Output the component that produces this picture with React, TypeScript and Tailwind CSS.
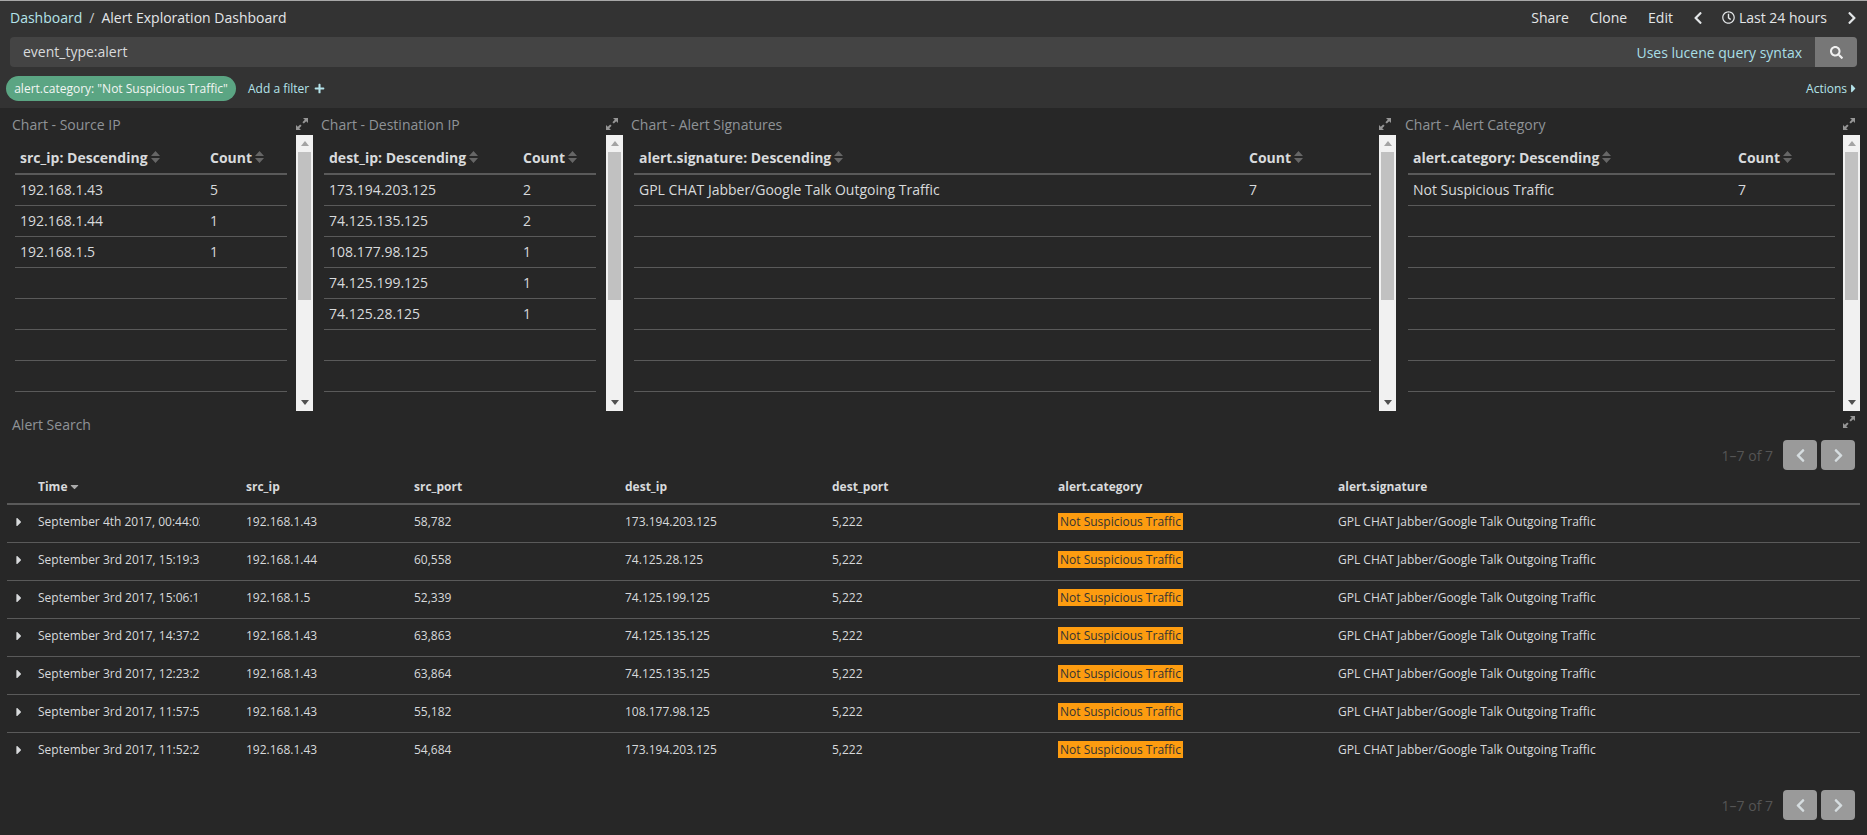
import { FaCaretDown, FaCaretRight, FaChevronLeft, FaChevronRight, FaPlus, FaRegClock, FaSearch } from "react-icons/fa";

const charts = [
  {
    title: "Chart - Source IP",
    width: "w-[301px]",
    table: "w-[272px]",
    cols: "grid-cols-[190px_1fr]",
    field: "src_ip: Descending",
    rows: [["192.168.1.43", "5"], ["192.168.1.44", "1"], ["192.168.1.5", "1"]],
  },
  {
    title: "Chart - Destination IP",
    width: "w-[302px]",
    table: "w-[272px]",
    cols: "grid-cols-[194px_1fr]",
    field: "dest_ip: Descending",
    rows: [["173.194.203.125", "2"], ["74.125.135.125", "2"], ["108.177.98.125", "1"], ["74.125.199.125", "1"], ["74.125.28.125", "1"]],
  },
  {
    title: "Chart - Alert Signatures",
    width: "w-[766px] pr-[1px]",
    table: "w-[737px]",
    cols: "grid-cols-[610px_1fr]",
    field: "alert.signature: Descending",
    rows: [["GPL CHAT Jabber/Google Talk Outgoing Traffic", "7"]],
  },
  {
    title: "Chart - Alert Category",
    width: "w-[455px]",
    table: "w-[427px]",
    cols: "grid-cols-[325px_1fr]",
    field: "alert.category: Descending",
    rows: [["Not Suspicious Traffic", "7"]],
  },
];

const alerts = [
  ["September 4th 2017, 00:44:03.5", "192.168.1.43", "58,782", "173.194.203.125"],
  ["September 3rd 2017, 15:19:32.1", "192.168.1.44", "60,558", "74.125.28.125"],
  ["September 3rd 2017, 15:06:17.2", "192.168.1.5", "52,339", "74.125.199.125"],
  ["September 3rd 2017, 14:37:26.4", "192.168.1.43", "63,863", "74.125.135.125"],
  ["September 3rd 2017, 12:23:29.8", "192.168.1.43", "63,864", "74.125.135.125"],
  ["September 3rd 2017, 11:57:55.6", "192.168.1.43", "55,182", "108.177.98.125"],
  ["September 3rd 2017, 11:52:28.3", "192.168.1.43", "54,684", "173.194.203.125"],
];

const searchCols = "grid-cols-[31px_208px_168px_211px_207px_226px_280px_1fr]";

function ExpandIcon() {
  return (
    <svg width="12" height="12" viewBox="0 0 12 12" className="text-[#969696]">
      <path d="M7 0h5v5l-1.8-1.8-2.4 2.4-1.4-1.4 2.4-2.4z M5 12H0V7l1.8 1.8 2.4-2.4 1.4 1.4-2.4 2.4z" fill="currentColor" />
    </svg>
  );
}

function SortIcon() {
  return (
    <svg width="9" height="12" viewBox="0 0 9 12" className="ml-[3px] text-[#666666]">
      <path d="M4.5 0 9 5H0z M0 7h9l-4.5 5z" fill="currentColor" />
    </svg>
  );
}

function Scrollbar() {
  return (
    <div className="flex h-[276px] w-[17px] shrink-0 flex-col items-center bg-[#f1f1f1]">
      <div className="flex h-[17px] items-center justify-center">
        <svg width="8" height="5" viewBox="0 0 8 5"><path d="M4 0l4 5H0z" fill="#a3a3a3" /></svg>
      </div>
      <div className="h-[148px] w-[13px] bg-[#c1c1c1]" />
      <div className="mt-auto flex h-[17px] items-center justify-center">
        <svg width="8" height="5" viewBox="0 0 8 5"><path d="M0 0h8L4 5z" fill="#505050" /></svg>
      </div>
    </div>
  );
}

function ChartPanel({ chart }: { chart: (typeof charts)[number] }) {
  const empty = 7 - chart.rows.length;
  return (
    <div className={`${chart.width} shrink-0`}>
      <div className="flex h-[27px] items-center justify-between pr-[5px] pt-[5px] text-[14px] text-[#8f9397]">
        <span>{chart.title}</span>
        <ExpandIcon />
      </div>
      <div className="flex justify-between pl-[3px]">
        <div className={chart.table}>
          <div className={`grid h-[40px] ${chart.cols} items-center border-b-2 border-[#5a5a5a] px-[5px] pt-[6px] text-[14px] font-bold text-[#d8dadc]`}>
            <span className="flex items-center">{chart.field}<SortIcon /></span>
            <span className="flex items-center">Count<SortIcon /></span>
          </div>
          {chart.rows.map((row) => (
            <div key={row[0]} className={`grid h-[31px] ${chart.cols} items-center border-b border-[#5a5a5a] px-[5px] pb-[2px] text-[14px] text-[#d8dadc]`}>
              <span>{row[0]}</span>
              <span>{row[1]}</span>
            </div>
          ))}
          {Array.from({ length: empty }).map((_, i) => (
            <div key={i} className="h-[31px] border-b border-[#5a5a5a]" />
          ))}
        </div>
        <Scrollbar />
      </div>
    </div>
  );
}

function Pager() {
  return (
    <div className="flex items-center justify-end">
      <span className="mr-[10px] text-[14px] text-[#555555]">1–7 of 7</span>
      <button className="flex h-[30px] w-[34px] items-center justify-center rounded-[4px] bg-[#9a9a9a] text-[#d6dde0]">
        <FaChevronLeft size={15} />
      </button>
      <button className="ml-[4px] flex h-[30px] w-[34px] items-center justify-center rounded-[4px] bg-[#9a9a9a] text-[#d6dde0]">
        <FaChevronRight size={15} />
      </button>
    </div>
  );
}

export default function App() {
  return (
    <div className="h-[835px] w-[1867px] overflow-hidden bg-[#272727] font-['Open_Sans',sans-serif]">
      {/* Top nav */}
      <div className="h-[108px] border-t border-[#a8a8a8] bg-[#333333]">
        <div className="flex h-[35px] items-center justify-between pb-[2px] pl-[10px] pr-[8px] text-[14px] text-[#e3e6e8]">
          <div className="flex items-center">
            <span className="text-[#b4e3ea]">Dashboard</span>
            <span className="mx-[7px] text-[#c8c8c8]">/</span>
            <span>Alert Exploration Dashboard</span>
          </div>
          <div className="flex items-center">
            <span>Share</span>
            <span className="ml-[21px]">Clone</span>
            <span className="ml-[21px]">Edit</span>
            <FaChevronLeft size={14} className="ml-[18px]" />
            <FaRegClock size={13} className="ml-[17px]" />
            <span className="ml-[4px]">Last 24 hours</span>
            <FaChevronRight size={14} className="ml-[18px]" />
          </div>
        </div>
        <div className="mx-[10px] mt-[1px] flex h-[30px] items-center overflow-hidden rounded-[4px] bg-[#444444] text-[14px]">
          <span className="pb-[2px] pl-[13px] text-[#d8dadc]">event_type:alert</span>
          <span className="ml-auto text-[#a9dfe6]">Uses lucene query syntax</span>
          <div className="ml-[13px] flex h-full w-[42px] items-center justify-center bg-[#777777] text-[#f0f0f0]">
            <FaSearch size={13} />
          </div>
        </div>
        <div className="mt-[9px] flex h-[25px] items-center pl-[6px] pr-[10px] text-[12px]">
          <span className="flex h-[25px] w-[230px] items-center justify-center rounded-full bg-[#5ba583] text-[#f2f5f3]">alert.category: "Not Suspicious Traffic"</span>
          <span className="ml-[12px] flex items-center text-[#b4e3ea]">Add a filter<FaPlus size={11} className="ml-[5px]" /></span>
          <span className="ml-auto flex items-center text-[#b4e3ea]">Actions<FaCaretRight size={13} className="-mr-[3px]" /></span>
        </div>
      </div>

      {/* Chart panels */}
      <div className="flex gap-[8px] pl-[12px]">
        {charts.map((chart) => (
          <ChartPanel key={chart.title} chart={chart} />
        ))}
      </div>

      {/* Alert search */}
      <div className="flex h-[29px] items-center justify-between pb-[2px] pl-[12px] pr-[12px] text-[14px] text-[#8f9397]">
        <span>Alert Search</span>
        <span className="mb-[5px]"><ExpandIcon /></span>
      </div>
      <div className="pr-[12px]">
        <Pager />
      </div>
      <div className="ml-[7px] mr-[7px]">
        <div className={`grid h-[35px] ${searchCols} items-center border-b-2 border-[#5a5a5a] text-[12px] font-bold text-[#d8dadc]`}>
          <span />
          <span className="flex items-center">Time<FaCaretDown size={13} className="ml-[1px] text-[#aaaaaa]" /></span>
          <span>src_ip</span>
          <span>src_port</span>
          <span>dest_ip</span>
          <span>dest_port</span>
          <span>alert.category</span>
          <span>alert.signature</span>
        </div>
        {alerts.map((row, i) => (
          <div key={row[0]} className={`grid h-[38px] ${searchCols} items-center pb-[4px] text-[12px] text-[#d8dadc] ${i < alerts.length - 1 ? "border-b border-[#5a5a5a]" : ""}`}>
            <span className="pl-[5px]"><FaCaretRight size={14} /></span>
            <span className="w-[162px] overflow-hidden whitespace-nowrap">{row[0]}</span>
            <span>{row[1]}</span>
            <span>{row[2]}</span>
            <span>{row[3]}</span>
            <span>5,222</span>
            <span><mark className="bg-[#fd9c10] px-[2px] text-[#333333]">Not Suspicious Traffic</mark></span>
            <span>GPL CHAT Jabber/Google Talk Outgoing Traffic</span>
          </div>
        ))}
      </div>
      <div className="mt-[19px] pr-[12px]">
        <Pager />
      </div>
    </div>
  );
}
